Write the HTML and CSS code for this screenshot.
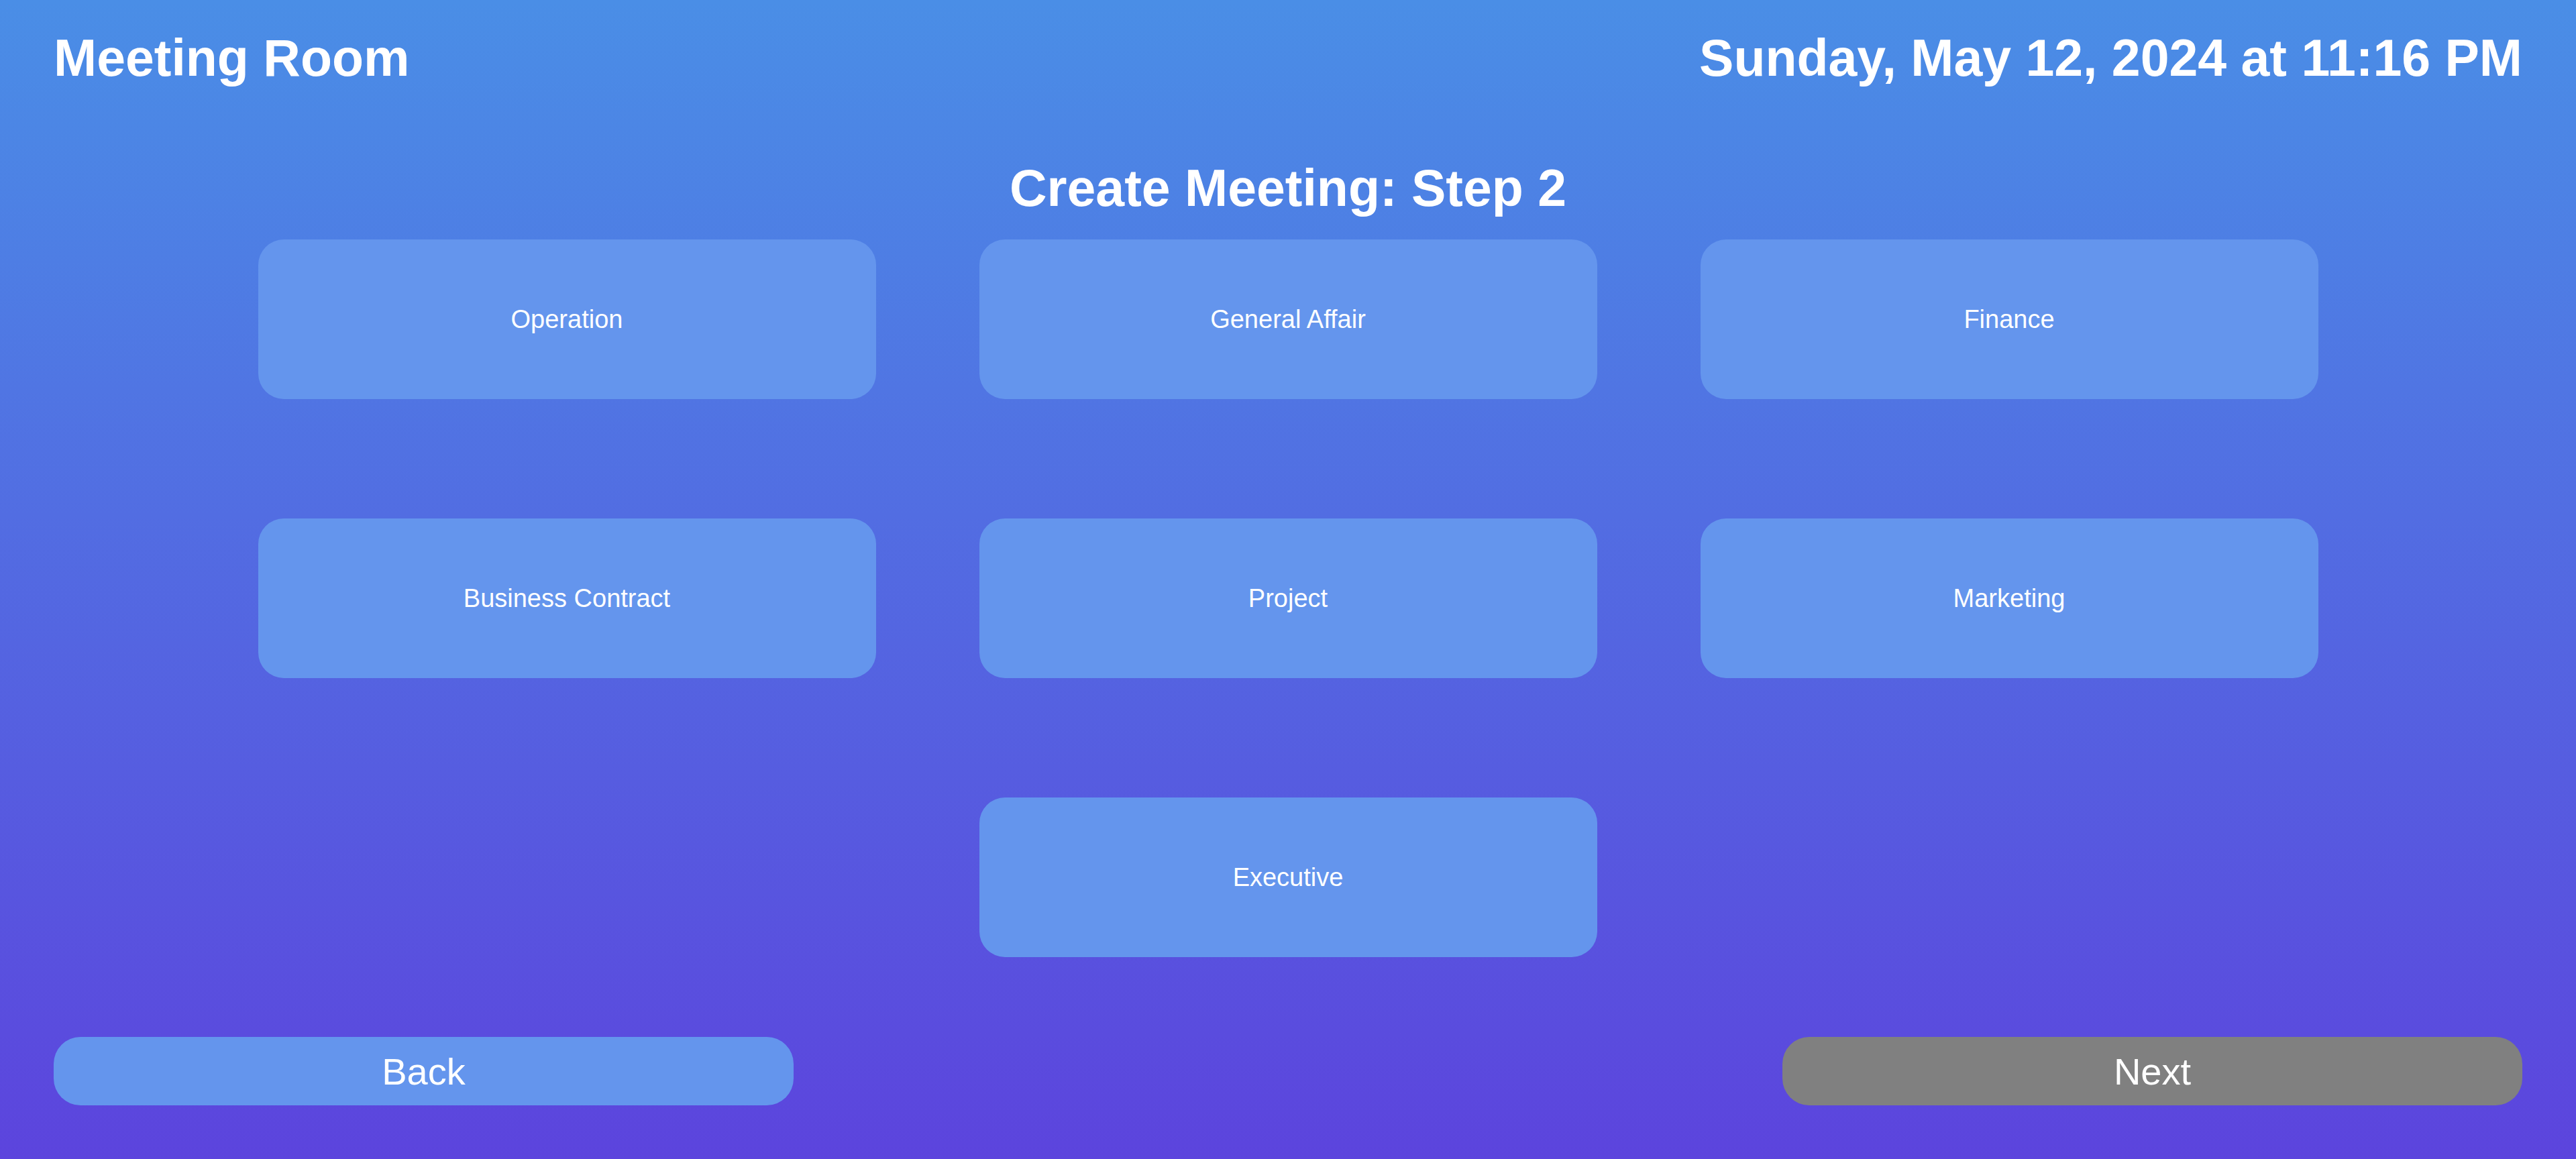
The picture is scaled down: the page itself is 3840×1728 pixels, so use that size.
FILE: index.html
```html
<!DOCTYPE html>
<html lang="en">
<head>
<meta charset="utf-8">
<title>Meeting Room</title>
<link rel="stylesheet" href="styles.css">
</head>
<body>
<div class="page">
  <header class="topbar">
    <h1 class="room">Meeting Room</h1>
    <div class="datetime">Sunday, May 12, 2024 at 11:16 PM</div>
  </header>
  <h2 class="step-title">Create Meeting: Step 2</h2>
  <div class="options">
    <button class="option">Operation</button>
    <button class="option">General Affair</button>
    <button class="option">Finance</button>
    <button class="option">Business Contract</button>
    <button class="option">Project</button>
    <button class="option">Marketing</button>
    <button class="option option-center">Executive</button>
  </div>
  <footer class="nav">
    <button class="nav-btn back">Back</button>
    <button class="nav-btn next">Next</button>
  </footer>
</div>
</body>
</html>
```
FILE: styles.css
```css
html, body {
  margin: 0;
  padding: 0;
}
body {
  font-family: "Liberation Sans", Arial, sans-serif;
  color: #ffffff;
  background: linear-gradient(to bottom, #4a8ee6 0%, #5c44dd 100%);
  min-height: 1728px;
}
.page {
  box-sizing: border-box;
  height: 1728px;
  padding: 43px 80px 80px;
  display: flex;
  flex-direction: column;
}
.topbar {
  display: flex;
  justify-content: space-between;
  align-items: flex-start;
}
.room,
.datetime {
  margin: 0;
  font-size: 77px;
  font-weight: bold;
  line-height: 87px;
}
.step-title {
  margin: 107px 0 33px;
  text-align: center;
  font-size: 77px;
  font-weight: bold;
  line-height: 87px;
}
.options {
  display: grid;
  grid-template-columns: repeat(3, 921px);
  grid-auto-rows: 238px;
  column-gap: 154px;
  row-gap: 178px;
  justify-content: center;
}
.option {
  border: none;
  border-radius: 38px;
  background: #6495ed;
  color: #ffffff;
  font-family: "Liberation Sans", Arial, sans-serif;
  font-size: 38px;
  padding: 0;
  cursor: pointer;
}
.option-center {
  grid-column: 2;
}
.nav {
  margin-top: auto;
  display: flex;
  justify-content: space-between;
}
.nav-btn {
  width: 1103px;
  height: 102px;
  border: none;
  border-radius: 40px;
  color: #ffffff;
  font-family: "Liberation Sans", Arial, sans-serif;
  font-size: 56px;
  padding: 0;
  cursor: pointer;
}
.back {
  background: #6495ed;
}
.next {
  background: #808080;
}
```
